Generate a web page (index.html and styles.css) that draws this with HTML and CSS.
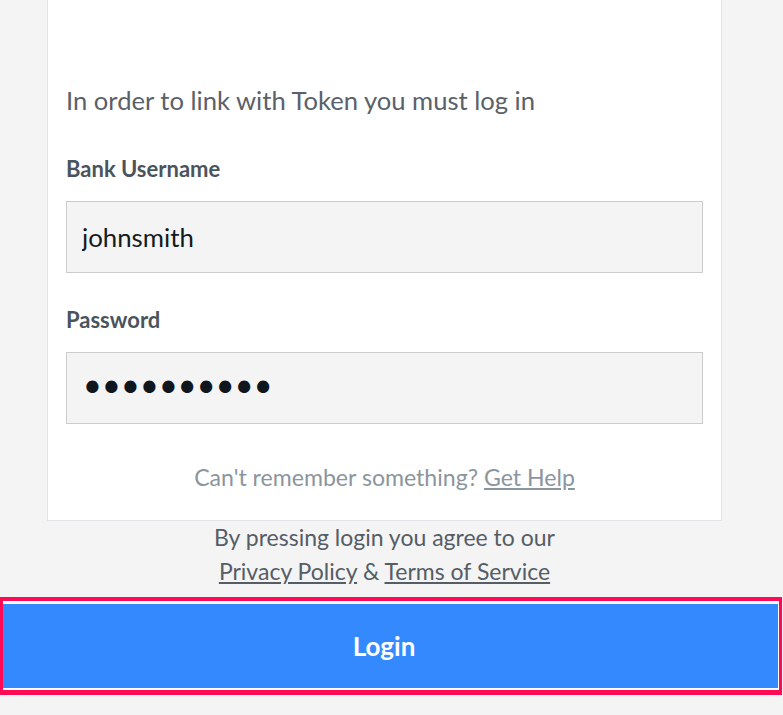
FILE: index.html
```html
<!DOCTYPE html>
<html lang="en">
<head>
    <meta charset="UTF-8">
    <meta name="viewport" content="width=device-width, initial-scale=1.0">
    <title>Bank Login</title>
    <link rel="stylesheet" href="styles.css">
</head>
<body>
    <div class="card">
        <p class="intro">In order to link with Token you must log in</p>
        <label for="username" class="field-label">Bank Username</label>
        <input type="text" id="username" class="field" value="johnsmith">
        <label for="password" class="field-label">Password</label>
        <input type="password" id="password" class="field password" value="secretpass">
        <p class="help">Can't remember something? <a href="#">Get Help</a></p>
    </div>
    <div class="terms">
        By pressing login you agree to our<br>
        <a href="#">Privacy Policy</a> &amp; <a href="#">Terms of Service</a>
    </div>
    <div class="login-wrap">
        <button class="login-button">Login</button>
    </div>
</body>
</html>
```

FILE: styles.css
```css
body {
    margin: 0;
    background: #f4f4f4;
    font-family: Lato, "Open Sans", sans-serif;
    color: #555d66;
}
.card {
    margin-left: 47px;
    width: 675px;
    box-sizing: border-box;
    background: white;
    border: 1px solid #e1e5ea;
    border-top: none;
    padding: 85px 18px 28px 18px;
}
.intro {
    margin: 0 0 42px 0;
    font-size: 25.6px;
    line-height: 30px;
    color: #5a6169;
}
.field-label {
    display: block;
    font-size: 22px;
    line-height: 24px;
    font-weight: bold;
    color: #4b545d;
    margin-bottom: 20px;
}
.field {
    display: block;
    width: 100%;
    height: 72px;
    box-sizing: border-box;
    margin: 0 0 35px 0;
    padding: 0 15px;
    background: #f4f4f4;
    border: 1px solid #cccccc;
    border-radius: 0;
    font-family: Lato, "Open Sans", sans-serif;
    font-size: 25.8px;
    color: #141a21;
    outline: none;
}
.password {
    margin-bottom: 38px;
    padding-left: 13px;
    font-family: "DejaVu Sans", sans-serif;
    font-size: 42px;
    letter-spacing: -5.8px;
    color: #10161d;
}
.help {
    margin: 0;
    text-align: center;
    font-size: 23.1px;
    line-height: 30px;
    color: #8b959e;
}
.help a {
    color: #8b959e;
}
.terms {
    margin-left: 47px;
    width: 675px;
    text-align: center;
    font-size: 23px;
    line-height: 34px;
    color: #555d66;
    margin-top: -1px;
}
.terms a {
    color: #555d66;
}
.login-wrap {
    margin: 9px 1px 20px 0;
    border-style: solid;
    border-color: #ff0a55;
    border-width: 4px 3px 5px 3px;
    background: white;
    padding: 3px 1px 2px 0;
}
.login-button {
    display: block;
    width: 100%;
    height: 84px;
    border: none;
    padding: 0 13px 0 0;
    background: #3589ff;
    color: white;
    font-family: Lato, "Open Sans", sans-serif;
    font-size: 26px;
    font-weight: bold;
    cursor: pointer;
}
```
